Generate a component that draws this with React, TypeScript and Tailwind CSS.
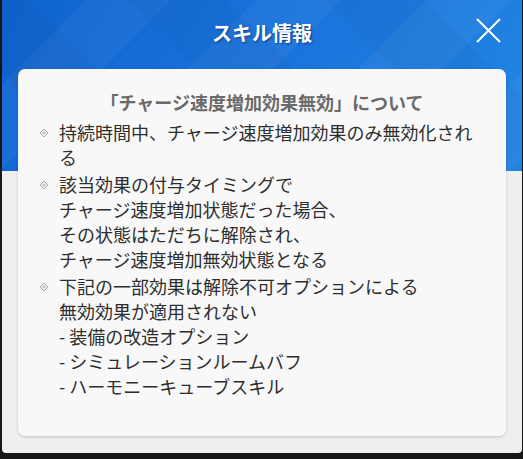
import React from "react";

const Bullet = () => (
  <svg width="10" height="10" viewBox="0 0 10 10" className="shrink-0">
    <path d="M5 1 L9 5 L5 9 L1 5 Z" fill="none" stroke="#a8a8a8" strokeWidth="1" />
    <path d="M5 3 V7 M3 5 H7" stroke="#b8b8b8" strokeWidth="1" />
  </svg>
);

const Item = ({ children }: { children: React.ReactNode }) => (
  <div className="flex">
    <div className="w-[21px] h-[25px] flex items-center justify-start pl-[1px] shrink-0">
      <Bullet />
    </div>
    <div className="flex-1">{children}</div>
  </div>
);

export default function App() {
  return (
    <div
      className="w-[523px] h-[459px] bg-[#161616] pl-[2px] pr-[1px] overflow-hidden"
      style={{ fontFamily: '"Noto Sans CJK JP", "Noto Sans", sans-serif' }}
    >
      <div className="relative w-[520px] h-[453px] bg-[#eeefee] rounded-b-[4px] overflow-hidden">
        <div className="absolute inset-x-0 top-0 h-[171px] bg-[linear-gradient(120deg,#0f62cf_0%,#1870da_40%,#1d7ade_70%,#2386e4_100%)]">
          <div className="absolute inset-0 bg-[repeating-linear-gradient(135deg,rgba(255,255,255,0)_0px,rgba(255,255,255,0)_60px,rgba(255,255,255,0.04)_60px,rgba(255,255,255,0.04)_120px)]" />
          <div className="absolute inset-0 bg-[repeating-linear-gradient(45deg,rgba(0,0,0,0)_0px,rgba(0,0,0,0)_70px,rgba(0,0,0,0.03)_70px,rgba(0,0,0,0.03)_140px)]" />
        </div>
        <div className="relative flex flex-col h-full px-4">
          <div className="h-[69px] flex items-start justify-center relative">
            <div className="mt-[18px] text-white text-[20px] leading-[30px] font-bold [text-shadow:1px_1px_2px_rgba(0,40,100,0.7)]">
              スキル情報
            </div>
            <svg
              className="absolute right-[5px] top-[18px]"
              width="25"
              height="25"
              viewBox="0 0 25 25"
            >
              <path d="M1 1 L24 24 M24 1 L1 24" stroke="white" strokeWidth="2" />
            </svg>
          </div>
          <div className="h-[367px] bg-[#f8f8f8] rounded-[7px] shadow-[0_1px_3px_rgba(0,0,0,0.18)] pt-[20px] pl-[20px] pr-[20px]">
            <div className="text-center text-[18px] leading-[26px] font-bold text-[#6a6a6a]">
              「チャージ速度増加効果無効」について
            </div>
            <div className="mt-[5px] flex flex-col gap-[2px] text-[18px] leading-[25px] text-[#2e2e2e]">
              <Item>持続時間中、チャージ速度増加効果のみ無効化される</Item>
              <Item>
                該当効果の付与タイミングで
                <br />
                チャージ速度増加状態だった場合、
                <br />
                その状態はただちに解除され、
                <br />
                チャージ速度増加無効状態となる
              </Item>
              <Item>
                下記の一部効果は解除不可オプションによる
                <br />
                無効効果が適用されない
                <br />- 装備の改造オプション
                <br />- シミュレーションルームバフ
                <br />- ハーモニーキューブスキル
              </Item>
            </div>
          </div>
        </div>
      </div>
    </div>
  );
}
